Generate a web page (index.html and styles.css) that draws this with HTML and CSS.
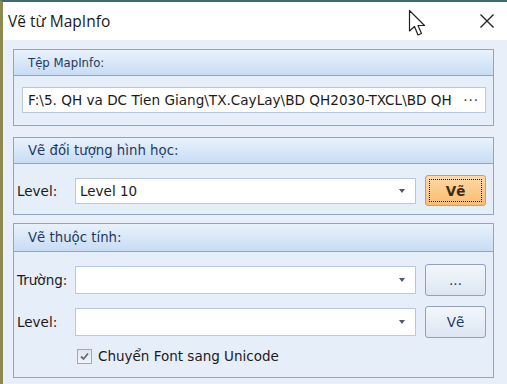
FILE: index.html
```html
<!DOCTYPE html>
<html>
<head>
<meta charset="utf-8">
<link rel="stylesheet" href="styles.css">
</head>
<body>
<div class="window">
  <div class="titlebar">
    <span class="title">Vẽ từ MapInfo</span>
    <svg class="close" width="16" height="16" viewBox="0 0 16 16"><path d="M1.5 1.5 L14.5 14.5 M14.5 1.5 L1.5 14.5" stroke="#222" stroke-width="1.4" fill="none"/></svg>
  </div>
  <div class="content">
    <div class="group g1">
      <div class="ghead">Tệp MapInfo:</div>
      <div class="gbody">
        <div class="textbox path"><span class="pathtext">F:\5. QH va DC Tien Giang\TX.CayLay\BD QH2030-TXCL\BD QH</span><span class="dots">···</span></div>
      </div>
    </div>
    <div class="group g2">
      <div class="ghead">Vẽ đối tượng hình học:</div>
      <div class="gbody">
        <div class="row">
          <span class="label">Level:</span>
          <div class="combo"><span class="ctext">Level 10</span><span class="arrow"></span></div>
          <button class="btn orange"><span class="focus">Vẽ</span></button>
        </div>
      </div>
    </div>
    <div class="group g3">
      <div class="ghead">Vẽ thuộc tính:</div>
      <div class="gbody">
        <div class="row r1">
          <span class="label">Trường:</span>
          <div class="combo"><span class="ctext"></span><span class="arrow"></span></div>
          <button class="btn">...</button>
        </div>
        <div class="row r2">
          <span class="label">Level:</span>
          <div class="combo"><span class="ctext"></span><span class="arrow"></span></div>
          <button class="btn">Vẽ</button>
        </div>
        <div class="checkrow">
          <span class="check"><svg width="11" height="11" viewBox="0 0 11 11"><path d="M2 5.5 L4.5 8 L9 2.5" stroke="#5f6f82" stroke-width="1.8" fill="none"/></svg></span>
          <span class="checklabel">Chuyển Font sang Unicode</span>
        </div>
      </div>
    </div>
  </div>
  <svg class="cursor" width="22" height="30" viewBox="0 0 22 30"><path d="M1.5 1.5 L1.5 22 L6.5 17.5 L10 26 L13.5 24.5 L10 16.5 L16.5 16.5 Z" fill="#fff" stroke="#222" stroke-width="1.2" stroke-linejoin="round"/></svg>
</div>
</body>
</html>
```

FILE: styles.css
```css
html, body {
  margin: 0;
  padding: 0;
}
body {
  width: 507px;
  height: 384px;
  overflow: hidden;
  background: #e8eff8;
}
.window {
  position: relative;
  width: 507px;
  height: 384px;
  box-sizing: border-box;
  border-left: 3px solid #8c8a4e;
  border-top: 2px solid #3e6b70;
  background: #e8eff8;
  font-family: "DejaVu Sans", sans-serif;
  font-size: 13.5px;
  color: #1b1b1b;
}
.titlebar {
  height: 38px;
  background: #ffffff;
  display: flex;
  align-items: center;
  padding-left: 5px;
  padding-right: 12px;
  justify-content: space-between;
}
.title {
  font-family: "Open Sans", "Noto Sans", sans-serif;
  font-size: 15.5px;
  color: #1a1a1a;
}
.close {
  display: block;
}
.content {
  padding: 9px 13px 0 10px;
  display: flex;
  flex-direction: column;
}
.group {
  border: 1px solid #8ea6c6;
  background: #e6eef9;
}
.g2 { margin-top: 11px; }
.g3 { margin-top: 8px; }
.ghead {
  height: 25px;
  border-bottom: 1px solid #8ea6c6;
  background: linear-gradient(#e9f2fc, #c8dcf4);
  color: #1e3a62;
  display: flex;
  align-items: center;
  padding-left: 14px;
  font-size: 13.3px;
}
.g1 .ghead {
  font-family: "DejaVu Sans Condensed", "DejaVu Sans", sans-serif;
  font-size: 13px;
}
.g3 .ghead { height: 27px; }
.g1 .gbody { padding: 11px 7px 12px 8px; }
.textbox {
  height: 24px;
  background: #fff;
  border: 1px solid #b9c9dd;
  display: flex;
  align-items: center;
  padding: 0 6px 0 5px;
  justify-content: space-between;
}
.pathtext {
  white-space: nowrap;
  overflow: hidden;
  font-size: 13.6px;
}
.dots { color: #333; letter-spacing: 1px; }
.g2 .gbody { padding: 11px 7px 8px 3px; }
.row {
  display: flex;
  align-items: center;
}
.label {
  width: 58px;
  flex: none;
  white-space: nowrap;
}
.combo {
  flex: none;
  width: 325px;
  height: 24px;
  background: #fff;
  border: 1px solid #b9c9dd;
  display: flex;
  align-items: center;
  justify-content: space-between;
  padding: 0 10px 0 4px;
  margin-right: 9px;
}
.arrow {
  width: 0; height: 0;
  border-left: 3.5px solid transparent;
  border-right: 3.5px solid transparent;
  border-top: 4px solid #4f5a6a;
}
.btn {
  width: 61px;
  height: 32px;
  border: 1px solid #8ea2bc;
  border-radius: 3px;
  background: linear-gradient(#f3f7fc, #dce6f2);
  font-family: "DejaVu Sans", sans-serif;
  font-size: 13.5px;
  color: #1e3a62;
  padding: 0;
  display: flex;
  align-items: center;
  justify-content: center;
}
.orange {
  height: 31px;
  background: linear-gradient(#fcd9a6, #f8bd70);
  border-color: #c8a060;
  padding: 3px;
  color: #3e2a10;
}
.orange .focus {
  flex: 1;
  align-self: stretch;
  border: 1px dotted #2a1a05;
  display: flex;
  align-items: center;
  justify-content: center;
  font-weight: bold;
}
.g3 .gbody { padding: 12px 7px 13px 3px; }
.r1 .combo { height: 26px; }
.r2 { margin-top: 10px; }
.r2 .combo { height: 26px; }
.checkrow {
  display: flex;
  align-items: center;
  margin-top: 10px;
  padding-left: 60px;
}
.check {
  width: 13px;
  height: 13px;
  border: 1px solid #9ea8b6;
  background: linear-gradient(#e2e6ec, #f2f4f7);
  display: flex;
  align-items: center;
  justify-content: center;
  margin-right: 6px;
}
.cursor {
  position: absolute;
  left: 405px;
  top: 7px;
}
```
